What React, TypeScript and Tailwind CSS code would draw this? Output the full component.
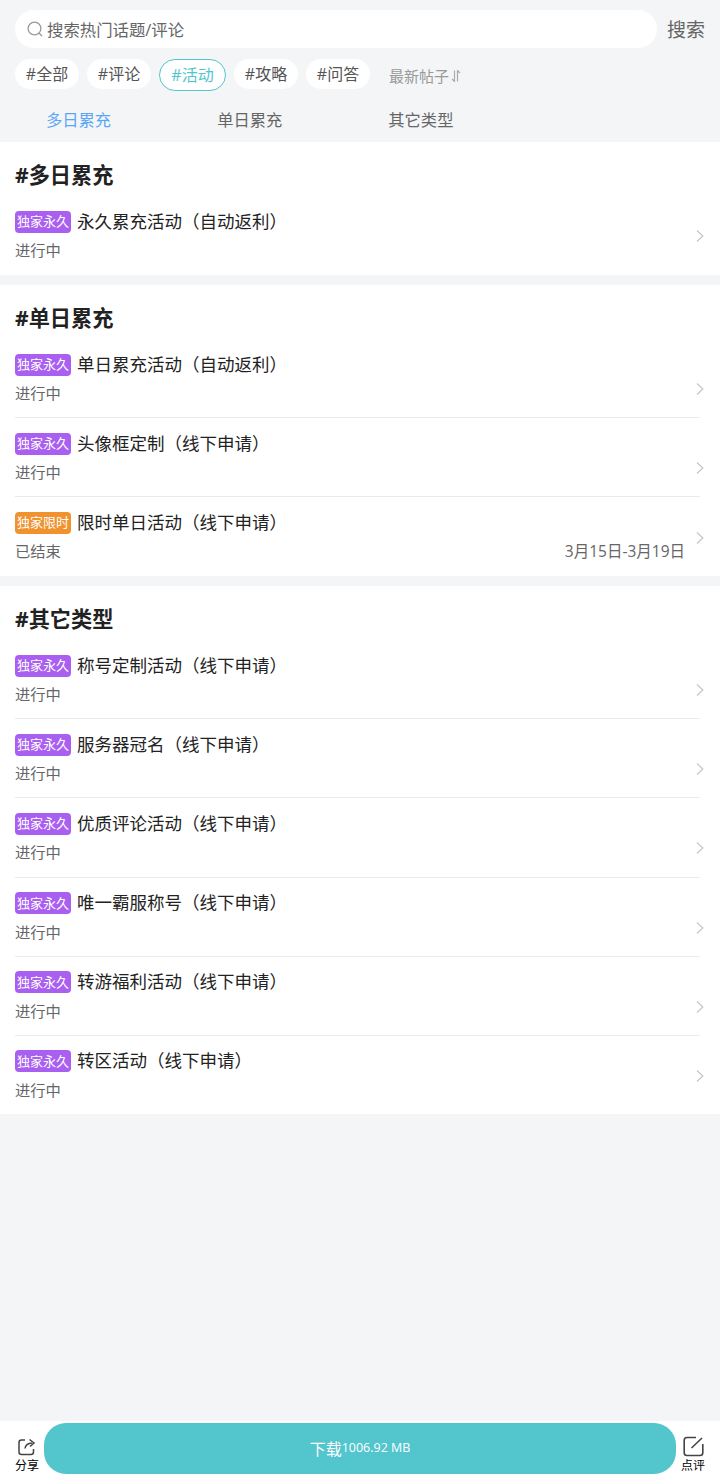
import React from "react";

type Activity = {
  title: string;
  badge?: string;
  status?: string;
  date?: string;
};

type Section = {
  name: string;
  items: Activity[];
};

const tags = ["#全部", "#评论", "#活动", "#攻略", "#问答"];
const tabs = ["多日累充", "单日累充", "其它类型"];

const sections: Section[] = [
  {
    name: "#多日累充",
    items: [{ title: "永久累充活动（自动返利）" }],
  },
  {
    name: "#单日累充",
    items: [
      { title: "单日累充活动（自动返利）" },
      { title: "头像框定制（线下申请）" },
      { title: "限时单日活动（线下申请）", badge: "独家限时", status: "已结束", date: "3月15日-3月19日" },
    ],
  },
  {
    name: "#其它类型",
    items: [
      { title: "称号定制活动（线下申请）" },
      { title: "服务器冠名（线下申请）" },
      { title: "优质评论活动（线下申请）" },
      { title: "唯一霸服称号（线下申请）" },
      { title: "转游福利活动（线下申请）" },
      { title: "转区活动（线下申请）" },
    ],
  },
];

function ActivityRow({ item, first, last }: { item: Activity; first: boolean; last: boolean }) {
  const limited = item.badge === "独家限时";
  return (
    <div className={`flex h-[79.2px] items-center ${first ? "" : "border-t border-[#ebebeb]"}`}>
      <div className={`min-w-0 flex-1 self-start ${first ? "pt-[15.5px]" : "pt-[14.5px]"}`}>
        <div className="flex h-[22px] items-center">
          <span
            className={`flex h-[22px] w-[56px] items-center justify-center rounded text-[13px] leading-none text-white ${limited ? "bg-[#f0922e]" : "bg-[#a95ff0]"}`}
          >
            {item.badge ?? "独家永久"}
          </span>
          <span className="ml-[6px] pb-[2px] text-[17.5px] leading-[22px] text-[#222]">{item.title}</span>
        </div>
        <div className="mt-[7.5px] flex justify-between pr-[10px] text-[15.3px] leading-[20px] text-[#666]">
          <span>{item.status ?? "进行中"}</span>
          {item.date && <span className="text-[15.5px]">{item.date}</span>}
        </div>
      </div>
      <svg
        className={`-mr-[5px] h-[14px] w-[10px] shrink-0 ${last ? "mt-[2px]" : "mt-[22px]"}`}
        viewBox="0 0 10 14"
        fill="none"
        stroke="#c8c8c8"
        strokeWidth="1.3"
      >
        <path d="M2 1.5 L7.8 7 L2 12.5" />
      </svg>
    </div>
  );
}

export default function App() {
  return (
    <div className="flex min-h-[1481px] flex-col bg-[#f4f5f7] font-['Open_Sans','Noto_Sans_CJK_SC',sans-serif]">
      <div className="flex h-[58px] items-start pl-[15px] pr-[15px] pt-[10px]">
        <div className="flex h-[38px] w-[642px] items-center rounded-[19px] bg-white pl-[12px]">
          <svg className="h-[16px] w-[16px]" viewBox="0 0 16 16" fill="none" stroke="#999" strokeWidth="1.3">
            <circle cx="7.5" cy="7.5" r="6.4" />
            <path d="M12.2 12.2 L15 15" />
          </svg>
          <span className="ml-[4px] pt-[2px] text-[16.4px] text-[#666]">搜索热门话题/评论</span>
        </div>
        <span className="ml-[10px] pt-[1px] text-[19px] leading-[38px] text-[#666]">搜索</span>
      </div>

      <div className="flex h-[33px] items-start gap-[8px] pl-[15px] pt-[1px]">
        {tags.map((tag) =>
          tag === "#活动" ? (
            <span
              key={tag}
              className="flex h-[32px] w-[67px] items-center justify-center rounded-[16px] border border-[#52c5cd] bg-white text-[16px] text-[#52c5cd]"
            >
              {tag}
            </span>
          ) : (
            <span
              key={tag}
              className="flex h-[30px] w-[64px] items-center justify-center rounded-[15px] bg-white text-[16px] text-[#555]"
            >
              {tag}
            </span>
          ),
        )}
        <span className="ml-[11px] flex h-[34px] items-center text-[15px] text-[#999]">
          最新帖子
          <svg className="ml-[2px] h-[12px] w-[10px]" viewBox="0 0 10 12" fill="none" stroke="#aaa" strokeWidth="1.2">
            <path d="M3.5 0.5 V11.5 L1 9 M6.5 11.5 V0.5 L9 3" />
          </svg>
        </span>
      </div>

      <div className="flex h-[51.1px] items-center gap-[106px] pl-[46px] pt-[8px]">
        {tabs.map((tab, i) => (
          <span key={tab} className={`text-[16.3px] ${i === 0 ? "text-[#5aa5f5]" : "text-[#666]"}`}>
            {tab}
          </span>
        ))}
      </div>

      <div className="flex flex-col gap-[10px]">
        {sections.map((section) => (
          <section key={section.name} className="bg-white pl-[15px] pr-[20px]">
            <h2 className="flex h-[53.4px] items-start pt-[17px] text-[21.2px] font-bold leading-[32px] text-[#222]">
              {section.name}
            </h2>
            {section.items.map((item, i) => (
              <ActivityRow
                key={item.title}
                item={item}
                first={i === 0}
                last={i === section.items.length - 1}
              />
            ))}
          </section>
        ))}
      </div>

      <div className="mt-auto flex h-[60px] items-start bg-white pt-[2px]">
        <div className="flex w-[44px] flex-col items-start pl-[15px] pt-[14px]">
          <svg className="ml-[2px] h-[20px] w-[20px]" viewBox="0 0 20 20" fill="none" stroke="#444" strokeWidth="1.5">
            <path d="M8 3 H4.5 Q2 3 2 5.5 V15 Q2 17.5 4.5 17.5 H14 Q16.5 17.5 16.5 15 V12" />
            <path d="M8 11.5 Q8.5 6.5 15 6 M12.5 2.5 L17 6 L13 9.5" />
          </svg>
          <span className="mt-[1px] text-[12px] leading-[16px] text-black">分享</span>
        </div>
        <div className="flex h-[51px] w-[632px] items-center justify-center rounded-[22px] bg-[#52c5cd] text-white">
          <span className="text-[16px]">下载</span>
          <span className="text-[12.5px]">1006.92 MB</span>
        </div>
        <div className="flex w-[44px] flex-col items-start pl-[5px] pt-[13px]">
          <svg className="ml-[2px] h-[21px] w-[21px]" viewBox="0 0 21 21" fill="none" stroke="#444" strokeWidth="1.6">
            <path d="M13 1.5 H4 Q1.2 1.5 1.2 4.3 V16.7 Q1.2 19.5 4 19.5 H17 Q19.8 19.5 19.8 16.7 V8" />
            <path d="M8.5 12 L19 2" />
          </svg>
          <span className="mt-[1px] text-[12px] leading-[16px] text-black">点评</span>
        </div>
      </div>
    </div>
  );
}
